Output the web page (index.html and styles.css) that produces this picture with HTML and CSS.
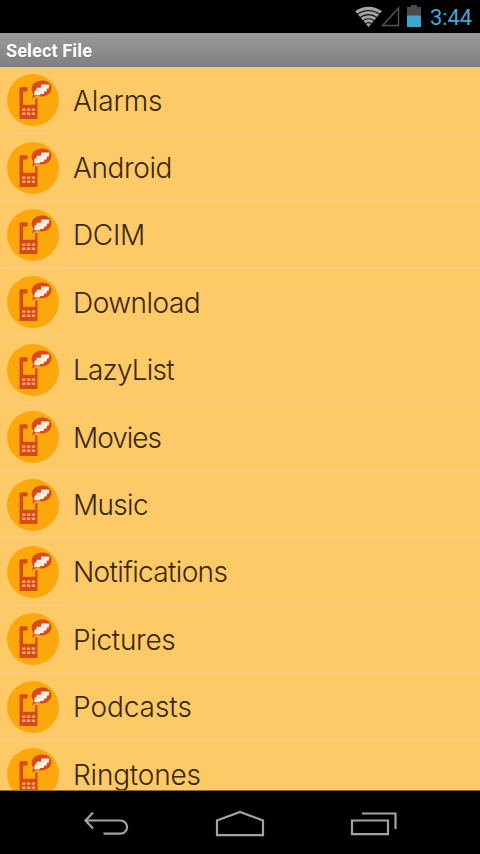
FILE: index.html
```
<!DOCTYPE html>
<html lang="en">
<head>
<meta charset="utf-8">
<title>Select File</title>
<link rel="stylesheet" href="styles.css">
</head>
<body>
<svg class="defs" aria-hidden="true">
  <symbol id="phone" viewBox="0 0 52 52">
    <circle cx="26" cy="26" r="26" fill="#fca80c"/>
    <path fill="#d84a15" d="M13.700 13.300h6.800v4.200h-4.400v13.300h12.100v-6.500h2.300v20.700h-18V14.300z"/>
    <path fill="#f6ad68" d="M15.200 34.400h3.300v2.400h-3.300zM20 34.400h3.300v2.400H20zM24.800 34.400h3.300v2.400h-3.300zM15.200 38.600h3.300V41h-3.300zM20 38.600h3.300V41H20zM24.800 38.600h3.300V41h-3.300z"/>
    <path fill="#d84a15" d="M34.700 6.500c5.600 0 9.800 2.700 9.800 7.300 0 4.900-4.400 8.700-9.800 8.700-1.700 0-3.300-.3-4.600-.9L25 24.600l1.400-5c-1.200-1.200-1.800-2.900-1.800-4.600 0-4.800 4.500-8.500 10.100-8.500z"/>
    <path fill="#fff0e5" d="M34.500 10.400h8l-.7 4h-1.600l-.7 3h-2.100l-.8 2.700h-3.300l-.4 1.200h-5.700l.6-4.800h1.500l.6-2.800h3.900z"/>
    <path stroke="#f3bfa5" stroke-width=".6" fill="none" d="M34 13.700l4.200.3M29.800 16.600l4.500.4"/>
  </symbol>
</svg>
<div class="screen">
  <header class="status">
    <svg width="27" height="22" viewBox="0 0 27 22">
      <path fill="#a3a3a3" d="M0 5Q13.5-3.5 27 5L13.500 21z"/>
      <path fill="none" stroke="#111" stroke-width="1.100" d="M2 8.300Q13.500.8 25 8.300M4.600 11.800Q13.500 5.500 22.400 11.800M7.400 15Q13.500 10.400 19.600 15M10 18Q13.500 15.200 17 18"/>
    </svg>
    <svg class="signal" width="19" height="21" viewBox="0 0 19 21"><path fill="none" stroke="#555" stroke-width="1.400" d="M17.500 2v17.500H1.500z"/></svg>
    <svg class="battery" width="14" height="22" viewBox="0 0 14 22"><path fill="#4b4b4b" d="M4 0h6v2h4v9H0V2h4z"/><path fill="#3ca5d0" d="M0 10.500h14V22H0z"/></svg>
    <span class="clock">3:44</span>
  </header>
  <h1 class="title">Select File</h1>
  <ul class="list">
    <li><svg class="icon"><use href="#phone"/></svg><span class="alarms">Alarms</span></li>
    <li><svg class="icon"><use href="#phone"/></svg><span class="android">Android</span></li>
    <li><svg class="icon"><use href="#phone"/></svg><span class="dcim">DCIM</span></li>
    <li><svg class="icon"><use href="#phone"/></svg><span class="download">Download</span></li>
    <li><svg class="icon"><use href="#phone"/></svg><span class="lazylist">LazyList</span></li>
    <li><svg class="icon"><use href="#phone"/></svg><span class="movies">Movies</span></li>
    <li><svg class="icon"><use href="#phone"/></svg><span class="music">Music</span></li>
    <li><svg class="icon"><use href="#phone"/></svg><span class="notifications">Notifications</span></li>
    <li><svg class="icon"><use href="#phone"/></svg><span class="pictures">Pictures</span></li>
    <li><svg class="icon"><use href="#phone"/></svg><span class="podcasts">Podcasts</span></li>
    <li><svg class="icon"><use href="#phone"/></svg><span class="ringtones">Ringtones</span></li>
  </ul>
  <nav class="nav">
    <svg width="46" height="28" viewBox="84 810 46 28"><path d="M94 812.500l-7.500 8 7.500 8M87 820.500h34.500a6.600 6.600 0 0 1 0 13.200H104.500"/></svg>
    <svg width="50" height="28" viewBox="215 809 50 28"><path d="M217 834.200v-14.700l23-8.500 23 8.500v14.700z"/></svg>
    <svg width="48" height="28" viewBox="351 810 48 28"><path d="M353 820.500h36v13.700h-36zM363 813.500h33.500v15.500"/></svg>
  </nav>
</div>
</body>
</html>
```
FILE: styles.css
```
* { box-sizing: border-box; }
body { margin: 0; background: #000; }
.defs { display: none; }
.screen {
  width: 480px;
  height: 854px;
  display: flex;
  flex-direction: column;
  overflow: hidden;
  background: #000;
  font-family: Roboto, "Liberation Sans", sans-serif;
}
.status {
  flex: none;
  height: 33px;
  display: flex;
  align-items: flex-start;
  justify-content: flex-end;
  padding: 6px 8px 0 0;
}
.status svg { flex: none; }
.status .signal { margin-left: -1px; }
.status .battery { margin: -1px 0 0 7px; }
.clock {
  width: 42px;
  margin-left: 9px;
  color: #3eaad6;
  font-size: 22px;
  line-height: 24px;
  white-space: nowrap;
  letter-spacing: -0.1px;
}
.title {
  flex: none;
  height: 34px;
  margin: 0;
  padding-left: 6px;
  background: linear-gradient(#9b9b9b, #7f7f7f);
  color: #fff;
  font-size: 18px;
  font-weight: 700;
  line-height: 35px;
  letter-spacing: 0.15px;
  text-shadow: 0 1px 1px #777;
}
.list {
  flex: 1;
  min-height: 0;
  overflow: hidden;
  margin: 0;
  padding: 0;
  list-style: none;
  background: #fec967;
  border-bottom: 1px solid #8a6a32;
}
.list li {
  height: 67.4px;
  display: flex;
  align-items: center;
  gap: 14px;
  padding: 1px 0 0 7.4px;
  border-bottom: 2px solid #fecc80;
  color: #382810;
  font: 300 28px/34px Inter, "Liberation Sans", sans-serif;
  white-space: nowrap;
}
.list span { padding-top: 1px; margin-left: -0.4px; }
.alarms { letter-spacing: -0.1px; }
.android { letter-spacing: -0.4px; }
.dcim { letter-spacing: -0.3px; }
.download { letter-spacing: -0.5px; }
.lazylist { letter-spacing: -0.8px; }
.movies { letter-spacing: -1px; }
.music { letter-spacing: -0.7px; }
.notifications { letter-spacing: -0.65px; }
.pictures { letter-spacing: -0.3px; }
.podcasts { letter-spacing: -0.05px; }
.ringtones { letter-spacing: -0.2px; }
.icon { flex: none; width: 52px; height: 52px; }
.nav {
  flex: none;
  height: 63px;
  display: flex;
  justify-content: space-between;
  align-items: flex-start;
  padding: 19px 82px 0 83px;
}
.nav svg { fill: none; stroke: #a3a3a3; stroke-width: 2.2; }
```
